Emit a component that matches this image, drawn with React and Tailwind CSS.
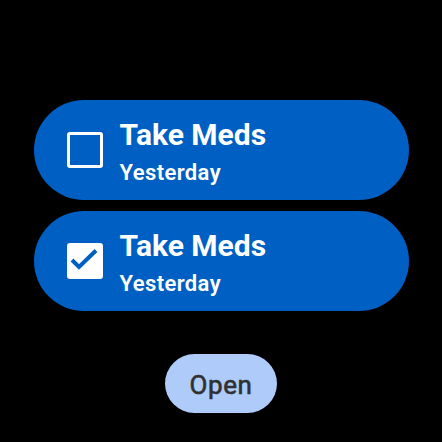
import React from 'react';

function Checkbox({ checked }) {
  if (checked) {
    return (
      <div className="w-[36px] h-[36px] rounded-[3px] bg-white shrink-0">
        <svg width="36" height="36" viewBox="0 0 36 36">
          <path d="M5 17 L12 24 L29 7.5" fill="none" stroke="#005fc2" strokeWidth="4" />
        </svg>
      </div>
    );
  }
  return <div className="w-[36px] h-[36px] rounded-[3px] border-[3px] border-white shrink-0" />;
}

function TaskChip({ checked }) {
  return (
    <div className="w-[375px] h-[100px] rounded-full bg-[#005fc2] flex items-center pl-[33px] gap-[17px]">
      <Checkbox checked={checked} />
      <div className="flex flex-col text-white pt-[6px]">
        <span className="text-[30px] leading-[34px] font-bold">Take Meds</span>
        <span className="mt-[6px] text-[22px] leading-[30px] font-semibold tracking-[0.4px]">Yesterday</span>
      </div>
    </div>
  );
}

export default function App() {
  return (
    <div className="w-[442px] h-[442px] bg-black flex flex-col items-center pt-[100px]" style={{ fontFamily: 'Roboto, "Noto Sans", sans-serif' }}>
      <div className="flex flex-col gap-[11px]">
        <TaskChip checked={false} />
        <TaskChip checked={true} />
      </div>
      <button className="mt-[43px] w-[112px] h-[59px] rounded-full bg-[#aecbfa] text-[#303030] text-[26px] font-normal tracking-[0.6px] [-webkit-text-stroke:0.6px_#303030] flex items-center justify-center pt-[3px]">
        Open
      </button>
    </div>
  );
}
